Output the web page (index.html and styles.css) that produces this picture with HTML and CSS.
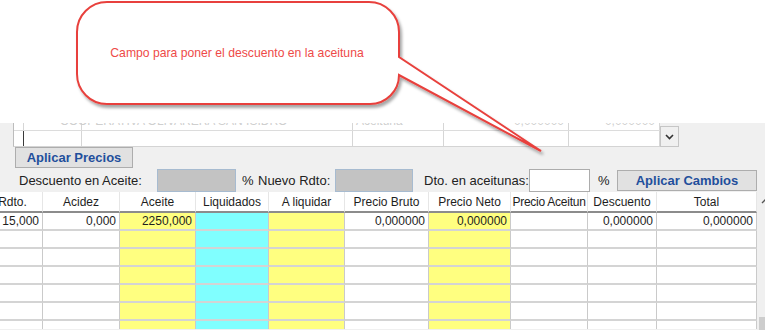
FILE: index.html
```html
<!DOCTYPE html>
<html lang="es">
<head>
  <meta charset="UTF-8">
  <meta name="viewport" content="width=device-width, initial-scale=1.0">
  <title>Descuento en aceituna</title>
  <link rel="stylesheet" href="styles.css">
</head>
<body>
  <svg class="callout" width="765" height="170" viewBox="0 0 765 170">
    <defs>
      <filter id="shadow" x="-10%" y="-10%" width="130%" height="140%">
        <feDropShadow dx="2" dy="3" stdDeviation="1.5" flood-color="#000" flood-opacity="0.35"/>
      </filter>
    </defs>
    <path d="M107,2 H369 A30,30 0 0 1 399,32 V57 L541,151 L399,75 A29,29 0 0 1 370,104 H107 A30,30 0 0 1 77,74 V32 A30,30 0 0 1 107,2 Z"
          fill="#fff" stroke="#e8413c" stroke-width="2" filter="url(#shadow)"/>
    <text x="237" y="57" text-anchor="middle" class="callout-text">Campo para poner el descuento en la aceituna</text>
  </svg>

  <div class="note"></div>

  <div class="panel">
    <div class="topgrid">
      <div class="tg">
        <div class="tg-row ghost">
          <div></div>
          <div class="ghost-long">COOPERATIVA OLIVARERA SAN ISIDRO</div>
          <div></div>
          <div class="left">Aceituna</div>
          <div>0,000000</div>
          <div>0,000000</div>
        </div>
        <div class="tg-row main">
          <div class="cursor"></div>
          <div></div>
          <div></div>
          <div></div>
          <div></div>
          <div></div>
        </div>
      </div>
      <div class="tg-drop">
        <svg width="9" height="6" viewBox="0 0 9 6"><path d="M1 1 L4.5 4.5 L8 1" fill="none" stroke="#333" stroke-width="1.6"/></svg>
      </div>
    </div>

    <button class="btn btn-precios">Aplicar Precios</button>

    <div class="fields">
      <span class="lbl lbl-desc">Descuento en Aceite:</span>
      <input type="text" class="inp inp-off inp-desc" readonly>
      <span class="pct">%</span>
      <span class="lbl lbl-rdto">Nuevo Rdto:</span>
      <input type="text" class="inp inp-off inp-rdto" readonly>
      <span class="lbl lbl-dto">Dto. en aceitunas:</span>
      <input type="text" class="inp inp-dto">
      <span class="pct pct-dto">%</span>
      <button class="btn btn-cambios">Aplicar Cambios</button>
    </div>

    <div class="grid-area">
      <div class="tbl-wrap">
        <table class="lines">
          <colgroup>
            <col style="width:60px"><col style="width:77px"><col style="width:76px"><col style="width:73px"><col style="width:76px">
            <col style="width:84px"><col style="width:82px"><col style="width:77px"><col style="width:69px"><col style="width:100px">
          </colgroup>
          <thead>
            <tr>
              <th>Rdto.</th><th>Acidez</th><th>Aceite</th><th>Liquidados</th><th>A liquidar</th>
              <th>Precio Bruto</th><th>Precio Neto</th><th class="tight">Precio Aceitun</th><th>Descuento</th><th>Total</th>
            </tr>
          </thead>
          <tbody>
            <tr>
              <td>15,000</td><td>0,000</td><td>2250,000</td><td></td><td></td>
              <td>0,000000</td><td>0,000000</td><td></td><td>0,000000</td><td>0,000000</td>
            </tr>
            <tr><td></td><td></td><td></td><td></td><td></td><td></td><td></td><td></td><td></td><td></td></tr>
            <tr><td></td><td></td><td></td><td></td><td></td><td></td><td></td><td></td><td></td><td></td></tr>
            <tr><td></td><td></td><td></td><td></td><td></td><td></td><td></td><td></td><td></td><td></td></tr>
            <tr><td></td><td></td><td></td><td></td><td></td><td></td><td></td><td></td><td></td><td></td></tr>
            <tr><td></td><td></td><td></td><td></td><td></td><td></td><td></td><td></td><td></td><td></td></tr>
            <tr><td></td><td></td><td></td><td></td><td></td><td></td><td></td><td></td><td></td><td></td></tr>
          </tbody>
        </table>
      </div>
      <div class="vscroll">
        <div class="arrow">
          <svg width="9" height="6" viewBox="0 0 9 6"><path d="M1 5 L4.5 1.5 L8 5" fill="none" stroke="#555" stroke-width="1.4"/></svg>
        </div>
        <div class="thumb"></div>
      </div>
    </div>
  </div>
</body>
</html>
```

FILE: styles.css
```css
* {
  box-sizing: border-box;
}

body {
  margin: 0;
  width: 765px;
  height: 330px;
  overflow: hidden;
  position: relative;
  background: #fff;
  font-family: "Liberation Sans", Arial, Helvetica, sans-serif;
  color: #1e1e1e;
}

.callout {
  position: absolute;
  left: 0;
  top: 0;
  z-index: 2;
  pointer-events: none;
}

.callout-text {
  font-family: "Liberation Sans", Arial, sans-serif;
  font-size: 12.2px;
  fill: #ee4a48;
}

.note {
  height: 123px;
}

.panel {
  background: #f0f0f0;
  height: 207px;
  overflow: hidden;
}

/* grid de arriba, casi fuera de la vista */
.topgrid {
  display: flex;
  height: 24px;
}

.tg {
  margin-left: 13px;
  width: 647px;
  background: #fff;
  border-left: 1px solid #bcbcbc;
  border-bottom: 1px solid #d4d4d4;
}

.tg-row {
  display: grid;
  grid-template-columns: 10px 58px 271px 91px 125px 91px;
}

.tg-row > div {
  border-right: 1px solid #d6d6d6;
}

.ghost {
  height: 8px;
  border-bottom: 1px solid #dcdcdc;
  overflow: hidden;
  font-size: 12px;
  line-height: 12px;
  color: #cfcfcf;
  white-space: nowrap;
}

.ghost > div {
  text-align: right;
  padding-right: 4px;
  margin-top: -8px;
}

.ghost .ghost-long {
  text-align: left;
  padding-left: 36px;
  overflow: visible;
}

.ghost .left {
  text-align: left;
  padding-left: 3px;
}

.main {
  height: 15px;
}

.tg-row > .cursor {
  border-right: 1px solid #3a3a3a;
}

.tg-drop {
  width: 19px;
  height: 21px;
  margin-top: 3px;
  background: #f0f0f0;
  border: 1px solid #c6c6c6;
  display: flex;
  align-items: center;
  justify-content: center;
}

.btn {
  display: block;
  height: 21px;
  padding: 0;
  background: #e1e1e1;
  border: 1px solid #adadad;
  font-family: "Liberation Sans", Arial, sans-serif;
  font-size: 13px;
  font-weight: bold;
  color: #1f4f9c;
}

.btn-precios {
  margin-left: 15px;
  width: 118px;
}

.fields {
  display: flex;
  align-items: center;
  height: 23px;
  margin-top: 1px;
  font-size: 13px;
  color: #222;
  white-space: nowrap;
}

.lbl-desc {
  width: 157px;
  padding-left: 19px;
}

.inp {
  height: 23px;
  padding: 0;
  font-size: 13px;
  outline: none;
}

.inp-off {
  background: #c3c3c3;
  border: 1px solid #a7bbd0;
}

.inp-desc {
  width: 79px;
}

.pct {
  width: 16px;
  padding-left: 6px;
}

.lbl-rdto {
  width: 83px;
  padding-left: 6px;
}

.inp-rdto {
  width: 78px;
}

.lbl-dto {
  width: 116px;
  padding-left: 11px;
}

.inp-dto {
  width: 61px;
  background: #fff;
  border: 1px solid #acacac;
}

.pct-dto {
  width: 27px;
  padding-left: 8px;
}

.btn-cambios {
  width: 140px;
}

/* lineas */
.grid-area {
  display: flex;
  height: 137px;
}

.tbl-wrap {
  width: 757px;
  flex: none;
  overflow: hidden;
  background: #fff;
}

.lines {
  margin-left: -17px;
  width: 774px;
  table-layout: fixed;
  border-collapse: separate;
  border-spacing: 0;
  font-size: 12px;
}

.lines th {
  height: 21px;
  padding: 0 1px;
  font-weight: normal;
  text-align: center;
  white-space: nowrap;
  overflow: hidden;
  background: #fff;
  border-right: 1px solid #e6e6e6;
  border-bottom: 2px solid #8c8c8c;
}

.lines th.tight {
  padding: 0;
  letter-spacing: -0.25px;
}

.lines td {
  height: 18px;
  padding: 0 3px 0 0;
  text-align: right;
  white-space: nowrap;
  overflow: hidden;
  border-right: 1px solid #cacaca;
  border-bottom: 2px solid #d4d4d4;
}

.lines td:nth-child(3),
.lines td:nth-child(5),
.lines td:nth-child(7) {
  background: #ffff80;
}

.lines td:nth-child(4) {
  background: #80ffff;
}

.vscroll {
  width: 17px;
  flex: none;
  background: #f0f0f0;
}

.arrow {
  height: 17px;
  display: flex;
  align-items: center;
  justify-content: center;
}

.thumb {
  margin: 108px 2px 0;
  height: 40px;
  background: #cdcdcd;
}
```
